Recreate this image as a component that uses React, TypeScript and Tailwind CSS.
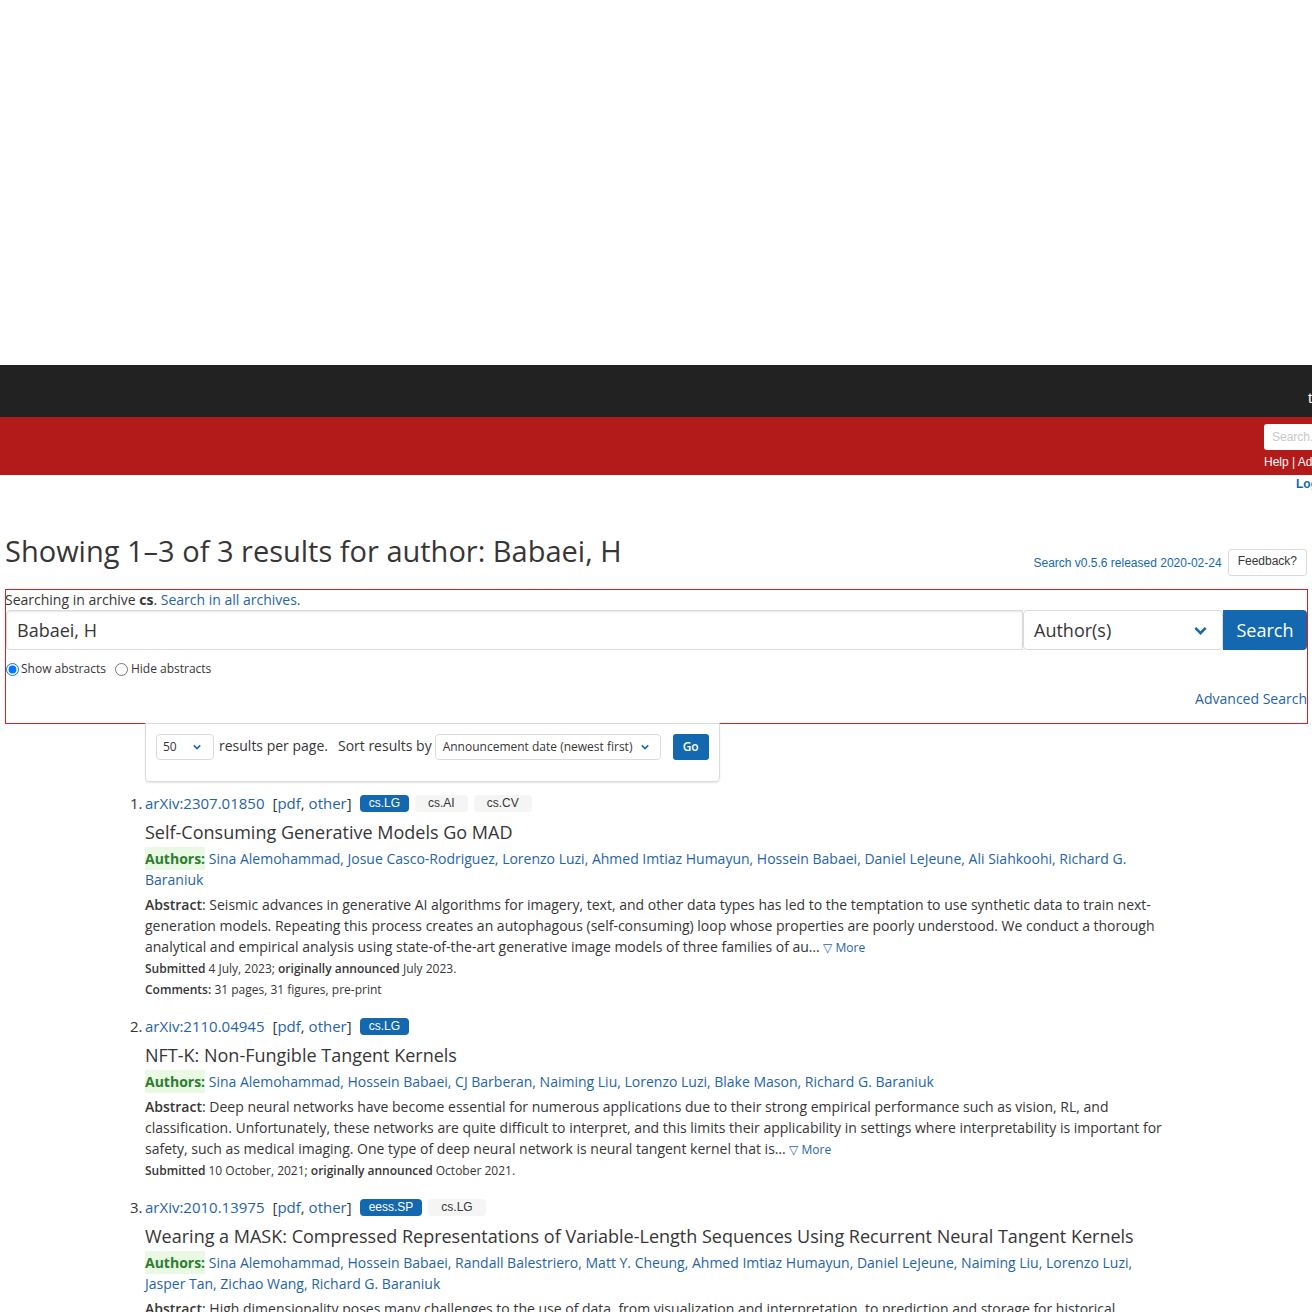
import React from "react";

interface Tag {
  name: string;
  primary?: boolean;
}

interface Result {
  id: string;
  tags: Tag[];
  title: string;
  authors: string[];
  abstract: string;
  submitted: string;
  announced: string;
  comments?: string;
}

const results: Result[] = [
  {
    id: "2307.01850",
    tags: [{ name: "cs.LG", primary: true }, { name: "cs.AI" }, { name: "cs.CV" }],
    title: "Self-Consuming Generative Models Go MAD",
    authors: [
      "Sina Alemohammad",
      "Josue Casco-Rodriguez",
      "Lorenzo Luzi",
      "Ahmed Imtiaz Humayun",
      "Hossein Babaei",
      "Daniel LeJeune",
      "Ali Siahkoohi",
      "Richard G. Baraniuk",
    ],
    abstract:
      "Seismic advances in generative AI algorithms for imagery, text, and other data types has led to the temptation to use synthetic data to train next-generation models. Repeating this process creates an autophagous (self-consuming) loop whose properties are poorly understood. We conduct a thorough analytical and empirical analysis using state-of-the-art generative image models of three families of au…",
    submitted: "4 July, 2023;",
    announced: "July 2023.",
    comments: "31 pages, 31 figures, pre-print",
  },
  {
    id: "2110.04945",
    tags: [{ name: "cs.LG", primary: true }],
    title: "NFT-K: Non-Fungible Tangent Kernels",
    authors: [
      "Sina Alemohammad",
      "Hossein Babaei",
      "CJ Barberan",
      "Naiming Liu",
      "Lorenzo Luzi",
      "Blake Mason",
      "Richard G. Baraniuk",
    ],
    abstract:
      "Deep neural networks have become essential for numerous applications due to their strong empirical performance such as vision, RL, and classification. Unfortunately, these networks are quite difficult to interpret, and this limits their applicability in settings where interpretability is important for safety, such as medical imaging. One type of deep neural network is neural tangent kernel that is…",
    submitted: "10 October, 2021;",
    announced: "October 2021.",
  },
  {
    id: "2010.13975",
    tags: [{ name: "eess.SP", primary: true }, { name: "cs.LG" }],
    title: "Wearing a MASK: Compressed Representations of Variable-Length Sequences Using Recurrent Neural Tangent Kernels",
    authors: [
      "Sina Alemohammad",
      "Hossein Babaei",
      "Randall Balestriero",
      "Matt Y. Cheung",
      "Ahmed Imtiaz Humayun",
      "Daniel LeJeune",
      "Naiming Liu",
      "Lorenzo Luzi",
      "Jasper Tan",
      "Zichao Wang",
      "Richard G. Baraniuk",
    ],
    abstract:
      "High dimensionality poses many challenges to the use of data, from visualization and interpretation, to prediction and storage for historical preservation. Techniques abound to reduce the dimensionality of fixed-length sequences, yet these methods rarely generalize to variable-length sequences. To address this gap, we extend existing methods that rely on the use of kernels to…",
    submitted: "26 October, 2020;",
    announced: "October 2020.",
  },
];

function Chevron({ className }: { className?: string }) {
  return (
    <svg viewBox="0 0 10 7" className={className} fill="none" stroke="#1468b0" strokeWidth="2">
      <path d="M1 1.5l4 4 4-4" />
    </svg>
  );
}

function ResultItem({ r, n }: { r: Result; n: number }) {
  return (
    <li className="mb-[16px]">
      <div className="flex items-center h-[20px] text-[15px] leading-[20px]">
        <span className="w-[15px] -ml-[15px] text-[#363636]">{n}.</span>
        <a className="text-[#1f64a8]">arXiv:{r.id}</a>
        <span className="ml-[8px] text-[#363636]">
          [<a className="text-[#1f64a8]">pdf</a>, <a className="text-[#1f64a8]">other</a>]
        </span>
        <span className="flex gap-[6px] ml-[8px] font-['Liberation_Sans',Arial,sans-serif] text-[12px]">
          {r.tags.map((t) =>
            t.primary ? (
              <span key={t.name} className="h-[17px] leading-[17px] px-[9px] rounded-[4px] bg-[#1468b0] text-white">
                {t.name}
              </span>
            ) : (
              <span key={t.name} className="h-[17px] leading-[17px] px-[13px] rounded-[4px] bg-[#f5f5f5] text-[#363636]">
                {t.name}
              </span>
            )
          )}
        </span>
      </div>
      <p className="mt-[7px] text-[18px] leading-[24px] text-[#363636]">{r.title}</p>
      <p className="mt-[4px] text-[14px] leading-[21px] text-[#1f64a8]">
        <span className="font-bold text-[#2e7d32] bg-[#e9f9e3] py-[2px]">Authors:</span>{" "}
        {r.authors.map((a, i) => (
          <React.Fragment key={a}>
            <a>{a}</a>
            {i < r.authors.length - 1 ? ", " : ""}
          </React.Fragment>
        ))}
      </p>
      <p className="mt-[4px] text-[14px] leading-[21px] text-[#363636]">
        <span className="font-semibold">Abstract</span>: {r.abstract}{" "}
        <a className="text-[12px] text-[#1f64a8]">▽ More</a>
      </p>
      <p className="text-[12px] leading-[21px] text-[#363636]">
        <span className="font-semibold">Submitted</span> {r.submitted}{" "}
        <span className="font-semibold">originally announced</span> {r.announced}
      </p>
      {r.comments && (
        <p className="text-[12px] leading-[21px] text-[#363636]">
          <span className="font-semibold">Comments:</span> {r.comments}
        </p>
      )}
    </li>
  );
}

export default function App() {
  return (
    <div className="w-[1312px] overflow-hidden bg-white font-['Open_Sans',sans-serif] text-[#363636]">
      <div className="h-[365px]" />
      <div className="h-[52px] bg-[#222222] pl-[1308px] pt-[25px] whitespace-nowrap text-white text-[15px] leading-[16px] font-['Liberation_Sans',Arial,sans-serif]">
        the
      </div>
      <div className="h-[58px] bg-[#b31b1b] pl-[1264px] pt-[7px] font-['Liberation_Sans',Arial,sans-serif]">
        <div className="w-[200px] h-[26px] bg-white rounded-[3px] pl-[8px] text-[12px] leading-[26px] text-[#c8c8c8]">
          Search...
        </div>
        <div className="mt-[5px] w-[200px] text-[12px] leading-[14px] text-white whitespace-nowrap">
          Help | Advanced Search
        </div>
      </div>
      <div className="pl-[1296px] h-[18px] text-[12px] leading-[18px] font-bold text-[#1468b0] whitespace-nowrap font-['Liberation_Sans',Arial,sans-serif]">
        Login
      </div>

      <div className="mt-[42px] mx-[5px] flex items-start justify-between">
        <h1 className="text-[29px] leading-[32px] text-[#363636]">
          Showing 1–3 of 3 results for author: Babaei, H
        </h1>
        <div className="mt-[14px] flex items-center gap-[6px] font-['Liberation_Sans',Arial,sans-serif] text-[12px]">
          <a className="text-[#1468b0]">Search v0.5.6 released 2020-02-24</a>
          <button className="h-[27px] px-[9px] border border-[#dbdbdb] rounded-[3px] bg-white text-[#363636] leading-[22px] self-start pb-[4px]">
            Feedback?
          </button>
        </div>
      </div>

      <div className="mt-[13px] ml-[5px] w-[1303px] h-[135px] border border-[#e31b1b]">
        <p className="text-[14px] leading-[20px] -ml-[1px]">
          Searching in archive <strong>cs</strong>. <a className="text-[#1f64a8]">Search in all archives.</a>
        </p>
        <div className="flex h-[40px]">
          <div className="flex-1 border border-[#dbdbdb] rounded-l-[4px] shadow-[inset_0_1px_2px_rgba(10,10,10,0.1)] pl-[10px] text-[18px] leading-[38px]">
            Babaei, H
          </div>
          <div className="w-[200px] flex items-center justify-between border border-[#dbdbdb] rounded-[4px] pl-[10px] pr-[15px] text-[18px]">
            <span>Author(s)</span>
            <Chevron className="w-[13px] h-[9px]" />
          </div>
          <button className="w-[84px] bg-[#1468b0] rounded-r-[4px] text-white text-[18px]">Search</button>
        </div>
        <div className="mt-[10px] flex items-center h-[18px] text-[12px]">
          <input type="radio" name="abs" defaultChecked className="m-0 w-[13px] h-[13px]" />
          <span className="ml-[2px]">Show abstracts</span>
          <input type="radio" name="abs" className="m-0 ml-[9px] w-[13px] h-[13px]" />
          <span className="ml-[3px]">Hide abstracts</span>
        </div>
        <div className="mt-[11px] text-right text-[14px] leading-[20px]">
          <a className="text-[#1f64a8]">Advanced Search</a>
        </div>
      </div>

      <div className="ml-[145px] w-[575px] h-[59px] -mt-[1px] border border-[#dbdbdb] rounded-b-[4px] shadow-[0_1px_2px_rgba(10,10,10,0.1)] pt-[10px] pl-[10px]">
        <div className="flex items-center">
          <div className="w-[58px] h-[26px] flex items-center justify-between border border-[#dbdbdb] rounded-[4px] pl-[6px] pr-[12px] text-[12px]">
            <span>50</span>
            <Chevron className="w-[8px] h-[6px]" />
          </div>
          <span className="ml-[5px] text-[14px] -mt-[3px]">results per page.</span>
          <span className="ml-[10px] text-[14px] -mt-[3px]">Sort results by</span>
          <div className="ml-[3px] w-[226px] h-[26px] flex items-center justify-between border border-[#dbdbdb] rounded-[4px] pl-[7px] pr-[11px] text-[12px]">
            <span>Announcement date (newest first)</span>
            <Chevron className="w-[8px] h-[6px]" />
          </div>
          <button className="ml-[12px] w-[36px] h-[26px] bg-[#1468b0] rounded-[3px] text-white text-[12px] font-semibold">
            Go
          </button>
        </div>
      </div>

      <ol className="mt-[11px] pl-[145px] w-[1167px]">
        {results.map((r, i) => (
          <ResultItem key={r.id} r={r} n={i + 1} />
        ))}
      </ol>
    </div>
  );
}
